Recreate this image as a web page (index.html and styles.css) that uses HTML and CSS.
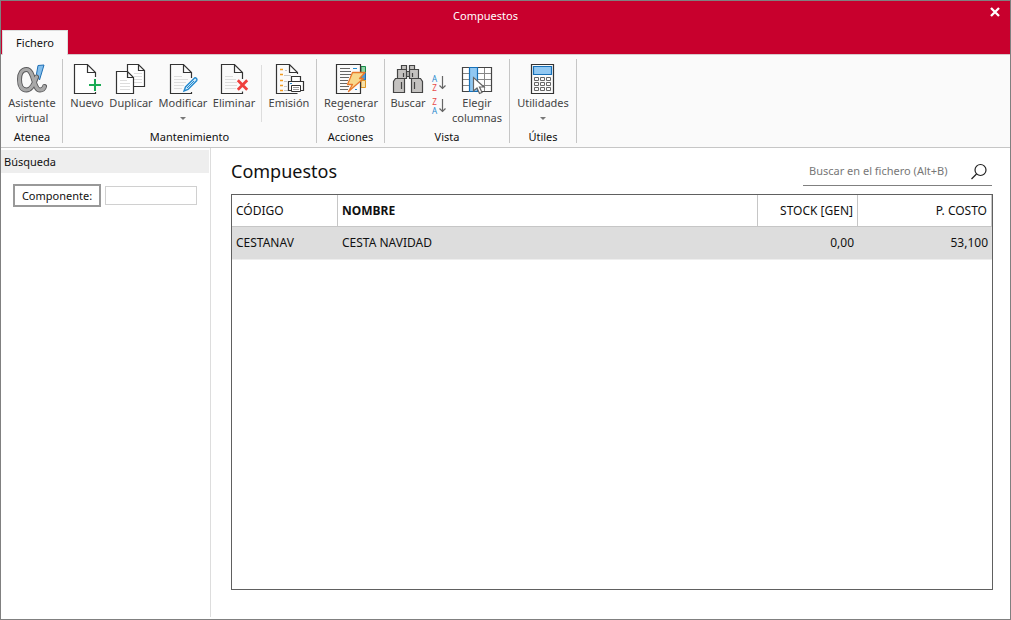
FILE: index.html
```html
<!DOCTYPE html>
<html lang="es">
<head>
<meta charset="utf-8">
<title>Compuestos</title>
<link rel="stylesheet" href="styles.css">
</head>
<body>
<div class="window">
  <header class="titlebar">
    <div class="title">Compuestos</div>
    <button class="close" aria-label="Cerrar"><svg width="12" height="12" viewBox="0 0 12 12"><path d="M2 2L10 10M10 2L2 10" stroke="#fff" stroke-width="2.3"/></svg></button>
    <button class="tab">Fichero</button>
  </header>

  <nav class="ribbon">
    <section class="group group-atenea">
      <div class="tools">
        <button class="tool w60">
          <svg class="icon" viewBox="0 0 32 32" fill="none">
            <path d="M22 2.500L28 2L23.500 17L20.500 11Z" fill="#83beec" stroke="#1f6fb5"/>
            <g stroke-linecap="round">
              <path d="M10.500 6.500C6 6.500 3.500 10.500 3.500 16.500C3.500 23 6 27 10.500 27C15 27 18.500 20 20.500 14M10.500 6.500C18.500 6.500 17 27 24 27C27 27 28 25.500 28.500 23.500" stroke="#58585a" stroke-width="5"/>
              <path d="M10.500 6.500C6 6.500 3.500 10.500 3.500 16.500C3.500 23 6 27 10.500 27C15 27 18.500 20 20.500 14M10.500 6.500C18.500 6.500 17 27 24 27C27 27 28 25.500 28.500 23.500" stroke="#a9a9a9" stroke-width="3.200"/>
            </g>
          </svg>
          <span>Asistente<br>virtual</span>
        </button>
      </div>
      <h2>Atenea</h2>
    </section>

    <section class="group group-mant">
      <div class="tools">
        <button class="tool w42">
          <svg class="icon" viewBox="0 0 32 32" fill="none">
            <path d="M24.500 14V9.500L16.500 1.500H3.500V30.500H24.500V29M16.500 1.500V9.500H24.500" fill="#fff" stroke="#333" stroke-width="1.200"/>
            <path d="M24 15V29" stroke="#fafafa" stroke-width="4"/>
            <path d="M24 16V28M18 22H30" stroke="#1aab54" stroke-width="2"/>
          </svg>
          <span>Nuevo</span>
        </button>
        <button class="tool w46">
          <svg class="icon" viewBox="0 0 32 32" fill="none">
            <path d="M12.500 1.500H23.500L29.500 7.500V23.500H12.500ZM23.500 1.500V7.500H29.500" fill="#fff" stroke="#333" stroke-width="1.200"/>
            <path d="M19 10.500H27M19 13.500H27M19 16.500H27M19 19.500H27" stroke="#ddd"/>
            <path d="M1.500 8.500H12.500L18.500 14.500V30.500H1.500ZM12.500 8.500V14.500H18.500" fill="#fff" stroke="#333" stroke-width="1.200"/>
            <path d="M5 17.500H12M5 20.500H15M5 23.500H15M5 26.500H15" stroke="#ddd"/>
          </svg>
          <span>Duplicar</span>
        </button>
        <button class="tool w58">
          <svg class="icon" viewBox="0 0 32 32" fill="none">
            <path d="M24.500 15V9.500L16.500 1.500H3.500V30.500H24.500V29M16.500 1.500V9.500H24.500" stroke="#333" stroke-width="1.200"/>
            <path d="M7 13.500H15M7 16.500H21M7 19.500H19M7 22.500H17M7 25.500H15" stroke="#ddd"/>
            <path d="M17 28L18.500 24L27.500 15Q28.500 14.500 29.500 15.500Q30.300 16.500 29.800 17.500L21 26.500Z" fill="#d6edfb" stroke="#2489ce" stroke-width="1.400"/>
            <path d="M20 25L27 18" stroke="#2489ce"/>
          </svg>
          <span>Modificar</span>
          <i class="arrow"></i>
        </button>
        <button class="tool w44">
          <svg class="icon" viewBox="0 0 32 32" fill="none">
            <path d="M24.500 16V9.500L16.500 1.500H3.500V30.500H24.500V28.500M16.500 1.500V9.500H24.500" stroke="#333" stroke-width="1.200"/>
            <path d="M7 13.500H15M7 16.500H18M7 19.500H19M7 22.500H19M7 25.500H18" stroke="#ddd"/>
            <path d="M19.800 17.300L29.200 26.700M29.200 17.300L19.800 26.700" stroke="#ef3f3d" stroke-width="2.800"/>
          </svg>
          <span>Eliminar</span>
        </button>
        <div class="divider"></div>
        <button class="tool w46">
          <svg class="icon" viewBox="0 0 32 32" fill="none">
            <path d="M24.500 11V9.500L16.500 1.500H3.500V30.500H24.500M16.500 1.500V9.500H24.500" stroke="#333" stroke-width="1.200"/>
            <path d="M7 6.500H10M7 11.500H10M7 17.500H10M7 22.500H10M7 27.500H10" stroke="#f29a1f" stroke-width="1.400"/>
            <path d="M12 7.500H14M11 12.500H18M11 18.500H14M11 23.500H14M11 27.500H17" stroke="#c8c8c8"/>
            <path d="M18.500 18.500V13.500H27.500V18.500M18.500 27.500H15.500V18.500H30.500V27.500H27.500" fill="#fff" stroke="#333" stroke-width="1.200"/>
            <path d="M18.500 22.500H27.500V28.500H18.500Z" fill="#fff" stroke="#333"/>
            <path d="M20 24.500H26M20 26.500H26" stroke="#999"/>
            <path d="M17 20.500H19" stroke="#2489ce"/>
          </svg>
          <span>Emisión</span>
        </button>
      </div>
      <h2>Mantenimiento</h2>
    </section>

    <section class="group group-acc">
      <div class="tools">
        <button class="tool w60">
          <svg class="icon" viewBox="0 0 32 32" fill="none">
            <path d="M26 3.500H30.500V9.500H26Z" fill="#8fd4a5" stroke="#168a4a"/>
            <path d="M26 9.500H30.500V17H26Z" fill="#4e9bd8" stroke="#1f6fb5"/>
            <path d="M26 17.500H30.500V24.500H26Z" fill="#f6e0a8" stroke="#e19622"/>
            <path d="M1.500 1.500H25.500V30.500H1.500Z" fill="#fafafa" stroke="#333" stroke-width="1.200"/>
            <path d="M5 5.500H15M5 8.500H16M5 11.500H16M5 14.500H14M5 17.500H13M5 20.500H12M5 23.500H14M5 26.500H13" stroke="#666"/>
            <path d="M18 5.500H22M20 26.500H22" stroke="#2489ce"/>
            <path d="M17.500 9.500H30L24.500 15.500H28.500L13.500 28.500L17.500 21.500H12.500Z" fill="#f8d88c" stroke="#e8792b" stroke-width="1.300" stroke-linejoin="round"/>
          </svg>
          <span>Regenerar<br>costo</span>
        </button>
      </div>
      <h2>Acciones</h2>
    </section>

    <section class="group group-vista">
      <div class="tools">
        <button class="tool w40">
          <svg class="icon" viewBox="0 0 32 32" fill="none">
            <g fill="#c4c2c0" stroke="#444" stroke-width="1.200">
              <path d="M9.500 2.500H14.500V6.500H9.500ZM17.500 2.500H22.500V6.500H17.500Z"/>
              <path d="M14.500 8.500H17.500V13.500H14.500Z"/>
              <path d="M5.500 6.500H14.500V15.500H5.500ZM17.500 6.500H26.500V15.500H17.500Z"/>
              <path d="M3.500 15.500H12.500V29.500H1.500V18.500ZM19.500 15.500H28.500L30.500 18.500V29.500H19.500Z"/>
              <path d="M11.500 10V14M20.500 10V14M9.500 19V26M22.500 19V26"/>
            </g>
          </svg>
          <span>Buscar</span>
        </button>
        <div class="sorts">
          <button class="sort" aria-label="Orden ascendente"><span class="letters"><b class="a">A</b><b class="z">Z</b></span><svg width="8" height="14" viewBox="0 0 8 14" fill="none"><path d="M3.500 0V13M0.500 9.500L3.500 12.500L6.500 9.500" stroke="#666" stroke-width="1.200"/></svg></button>
          <button class="sort" aria-label="Orden descendente"><span class="letters"><b class="z">Z</b><b class="a">A</b></span><svg width="8" height="14" viewBox="0 0 8 14" fill="none"><path d="M3.500 0V13M0.500 9.500L3.500 12.500L6.500 9.500" stroke="#666" stroke-width="1.200"/></svg></button>
        </div>
        <button class="tool w54">
          <svg class="icon" viewBox="0 0 32 32" fill="none">
            <path d="M1.500 4.500H30.500V28.500H1.500Z" fill="#fff"/>
            <path d="M1 10.500H31M1 16.500H31M1 22.500H31M16.500 4V28M23.500 4V28" stroke="#888"/>
            <path d="M1.500 4.500H30.500V28.500H1.500Z" stroke="#444" stroke-width="1.200"/>
            <path d="M8.500 4.500H16.500V28.500H8.500Z" fill="#91c8f2" stroke="#1670b8" stroke-width="1.200"/>
            <path d="M12.500 14.500V28L16 25L18.500 30.500L21 29.500L18.500 24H23Z" fill="#fff" stroke="#666" stroke-width="1.200"/>
          </svg>
          <span>Elegir<br>columnas</span>
        </button>
      </div>
      <h2>Vista</h2>
    </section>

    <section class="group group-utiles">
      <div class="tools">
        <button class="tool w60">
          <svg class="icon" viewBox="0 0 32 32" fill="none">
            <path d="M4.500 1.500H26.500V30.500H4.500Z" fill="#fafafa" stroke="#333" stroke-width="1.200"/>
            <path d="M6.500 3.500H24.500V11.500H6.500Z" fill="#91c8f2" stroke="#1670b8" stroke-width="1.200"/>
            <path d="M7.500 14.500h4v3h-4zM13.500 14.500h4v3h-4zM19.500 14.500h4v3h-4zM7.500 19.500h4v3h-4zM13.500 19.500h4v3h-4zM19.500 19.500h4v3h-4zM7.500 24.500h4v3h-4zM13.500 24.500h4v3h-4zM19.500 24.500h4v3h-4z" stroke="#666"/>
          </svg>
          <span>Utilidades</span>
          <i class="arrow"></i>
        </button>
      </div>
      <h2>Útiles</h2>
    </section>
  </nav>

  <div class="body">
    <aside class="sidebar">
      <h3>Búsqueda</h3>
      <div class="filter">
        <button class="filter-button" id="componente">Componente:</button>
        <input class="filter-input" type="text" aria-labelledby="componente">
      </div>
    </aside>
    <main class="main">
      <div class="main-head">
        <h1>Compuestos</h1>
        <div class="search">
          <input type="text" placeholder="Buscar en el fichero (Alt+B)" aria-label="Buscar en el fichero">
          <button aria-label="Buscar"><svg width="18" height="18" viewBox="0 0 18 18" fill="none" stroke="#222" stroke-width="1.200"><circle cx="10.500" cy="7" r="5.500"/><path d="M6.500 11L1.500 16"/></svg></button>
        </div>
      </div>
      <div class="grid">
        <table>
          <colgroup><col class="c-code"><col><col class="c-stock"><col class="c-cost"></colgroup>
          <thead><tr><th>CÓDIGO</th><th class="sorted">NOMBRE</th><th class="num">STOCK [GEN]</th><th class="num">P. COSTO</th></tr></thead>
          <tbody><tr><td>CESTANAV</td><td>CESTA NAVIDAD</td><td class="num">0,00</td><td class="num">53,100</td></tr></tbody>
        </table>
      </div>
    </main>
  </div>
</div>
</body>
</html>
```
FILE: styles.css
```css
* { box-sizing: border-box; }
body {
  margin: 0;
  font-family: "Noto Sans", "Open Sans", sans-serif;
  font-size: 11px;
  line-height: 15px;
  color: #111;
}
button, input { font: inherit; color: inherit; margin: 0; padding: 0; border: 0; background: none; border-radius: 0; }
h1, h2, h3 { margin: 0; font-weight: 400; }
svg { display: block; flex: none; }

.window {
  min-height: 100vh;
  display: flex;
  flex-direction: column;
  border: 1px solid #808080;
  background: #fff;
}

.titlebar {
  display: grid;
  grid-template-columns: 70px 1fr 70px;
  grid-template-rows: 29px 24px;
  background: #c8002d;
  border-bottom: 1px solid #d8c8cc;
}
.title { grid-column: 2; color: #fff; text-align: center; padding: 7px 40px 0 0; }
.close { grid-column: 3; justify-self: end; align-self: start; margin: 5px 9px 0 0; }
.tab { grid-column: 1; grid-row: 2; justify-self: start; margin: 0 0 -1px 1px; padding: 0 13px 1px; background: #fafafa; border: 1px solid #ddd; border-bottom: 0; min-width: 66px; }

.ribbon { display: flex; background: #fafafa; border-bottom: 1px solid #c6c6c6; padding: 4px 0; }
.group { display: flex; flex-direction: column; border-right: 1px solid #c6c6c6; height: 84px; }
.group h2 { text-align: center; font-size: 11px; line-height: 12px; padding-top: 4px; }
.group-atenea { padding-left: 1px; }
.group-mant .tools { padding: 0 4px 0 3px; }
.group-acc .tools { padding: 0 3px 0 4px; }
.group-vista .tools { padding: 0 5px 0 3px; }
.group-utiles .tools { padding: 0 3px; }
.tools { display: flex; height: 70px; }
.tool { display: flex; flex-direction: column; align-items: center; padding-top: 4px; color: #444; white-space: nowrap; }
.icon { width: 32px; height: 32px; }
.w40 { width: 40px; }
.w42 { width: 42px; }
.w44 { width: 44px; }
.w46 { width: 46px; }
.w54 { width: 54px; }
.w58 { width: 58px; }
.w60 { width: 60px; }
.arrow { margin-top: 7px; border: 3px solid transparent; border-top-color: #777; border-bottom: 0; }
.divider { width: 1px; margin: 6px 4px 5px 5px; background: #ddd; }
.sorts { display: flex; flex-direction: column; gap: 6px; width: 22px; padding: 15px 0 0 3px; }
.sort { display: flex; align-items: center; gap: 1px; height: 17px; }
.letters { display: flex; flex-direction: column; width: 7px; }
.letters b { font-size: 8px; line-height: 9px; font-weight: 400; }
.a { color: #2489ce; }
.z { color: #e84b4b; }

.body { flex: 1; display: flex; padding-bottom: 2px; }
.sidebar { width: 210px; border-right: 1px solid #ddd; padding-top: 2px; }
.sidebar h3 { background: #eee; margin-right: 1px; padding: 4px 3px; font-size: 11px; }
.filter { display: flex; align-items: center; gap: 4px; padding: 11px 13px 0 12px; }
.filter-button { width: 88px; height: 23px; border: 2px solid #999; background: #fff; }
.filter-input { flex: 1; min-width: 0; height: 19px; border: 1px solid #d0d0d0; padding: 0 4px; }

.main { flex: 1; display: flex; flex-direction: column; padding: 10px 17px 27px 20px; }
.main-head { display: flex; justify-content: space-between; margin-bottom: 8px; height: 28px; }
h1 { font-size: 18px; line-height: 26px; }
.search { display: flex; width: 189px; margin-right: 1px; align-items: center; border-bottom: 1px solid #808080; }
.search input { flex: 1; min-width: 0; padding: 0 6px 2px; outline: 0; }
.search input::placeholder { color: #777; opacity: 1; }
.search button { margin-right: 4px; }

.grid { flex: 1; border: 1px solid #606060; }
table { width: 100%; border-collapse: separate; border-spacing: 0; table-layout: fixed; font-size: 12px; }
.c-code { width: 106px; }
.c-stock { width: 100px; }
.c-cost { width: 134px; }
th, td { height: 32px; padding: 0 4px; text-align: left; font-weight: 400; }
th { border-right: 1px solid #c6c6c6; border-bottom: 1px solid #c6c6c6; }
td { background: #ddd; height: 33px; padding-bottom: 1px; border-bottom: 1px solid #eee; }
th.sorted { font-weight: 700; }
th.num, td.num { text-align: right; }
```
